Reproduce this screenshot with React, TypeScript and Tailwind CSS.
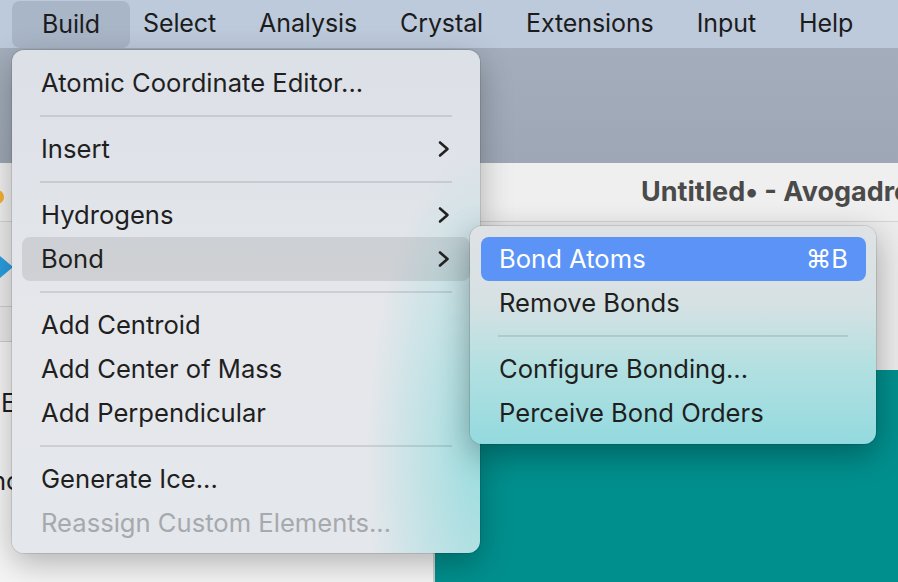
import React from "react";

const ink = "text-[#1f1f1f]";

function Chevron() {
  return (
    <svg width="14" height="18" viewBox="0 0 14 18" className="shrink-0">
      <path d="M3 2.5 L10.5 9 L3 15.5" fill="none" stroke="#222" strokeWidth="2.6" strokeLinecap="round" strokeLinejoin="round" />
    </svg>
  );
}

function Item({ label, sub, active, disabled }: { label: string; sub?: boolean; active?: boolean; disabled?: boolean }) {
  return (
    <div
      className={`mx-[10px] h-[44px] px-[19px] flex items-center justify-between rounded-[8px] ${
        active ? "bg-black/[0.09]" : ""
      } ${disabled ? "text-[#a6a9ad]" : ink}`}
    >
      <span>{label}</span>
      {sub && <Chevron />}
    </div>
  );
}

function Sep({ inset }: { inset: string }) {
  return (
    <div className={`h-[22px] flex items-center ${inset}`}>
      <div className="h-[2px] w-full bg-black/[0.1]" />
    </div>
  );
}

function SubItem({ label, keys, active }: { label: string; keys?: string; active?: boolean }) {
  return (
    <div
      className={`ml-[11px] mr-[10px] h-[44px] px-[18px] flex items-center justify-between rounded-[8px] ${
        active ? "bg-[#5b94f6] text-white" : ink
      }`}
    >
      <span>{label}</span>
      {keys && <span className="font-['Inter','DejaVu_Sans',sans-serif]">{keys}</span>}
    </div>
  );
}

export default function App() {
  const bar = ["Select", "Analysis", "Crystal", "Extensions", "Input", "Help"];
  return (
    <div className="relative w-[898px] h-[582px] overflow-hidden bg-[#f4f4f4] font-['Inter','Noto_Sans',sans-serif] text-[25.6px]">
      {/* menu bar */}
      <div className="h-[48px] bg-[#bdcadb] flex items-stretch text-[#1c1c1c] text-[25px] tracking-[-0.1px]">
        <div className="ml-[12px] mt-[1px] w-[118px] rounded-[8px] bg-[#a9b6c7] flex items-center justify-center">
          Build
        </div>
        <div className="ml-[13px] flex items-center gap-[43px]">
          {bar.map((b) => (
            <span key={b}>{b}</span>
          ))}
        </div>
      </div>

      {/* desktop strip */}
      <div className="h-[115px] bg-[linear-gradient(180deg,#a3adbb,#9da7b5)]" />

      {/* window title bar */}
      <div className="relative h-[59px] bg-[#efefef] border-b border-[#d4d4d4] flex items-center pl-[641px]">
        <div className="absolute left-[-10px] top-[27px] w-[14px] h-[14px] rounded-full bg-[#f5b032]" />
        <span className="font-bold text-[27px] text-[#4a4a4a] whitespace-nowrap">Untitled• - Avogadro</span>
      </div>

      {/* window body */}
      <div className="flex h-[360px]">
        <div className="w-[435px] border-r-2 border-[#cfcfcf] flex flex-col">
          <div className="h-[85px] bg-[#ececec] border-b border-[#cdcdcd] flex items-center">
            <svg width="14" height="22" viewBox="0 0 14 22" className="mt-[6px]">
              <path d="M0 0 L13 11 L0 22 Z" fill="#2a9ee0" />
            </svg>
          </div>
          <div className="h-[35px] bg-[#e9e9e9] border-b border-[#cdcdcd]" />
          <div className="flex-1 bg-[#f5f5f5] text-[#1f1f1f] overflow-hidden">
            <div className="mt-[42px] ml-[1px]">E</div>
            <div className="mt-[40px] -ml-[9px]">nc</div>
          </div>
        </div>
        <div className="flex-1 flex flex-col">
          <div className="h-[148px] bg-[#ececec]" />
          <div className="flex-1 bg-[#018f8d]" />
        </div>
      </div>

      {/* Build menu */}
      <div className="absolute left-[12px] top-[50px] w-[468px] h-[503px] rounded-[12px] pt-[11px] ring-1 ring-black/10 shadow-[0_10px_32px_rgba(0,0,0,0.28)] bg-[radial-gradient(ellipse_24%_62%_at_100%_82%,rgba(150,220,222,0.9),transparent),linear-gradient(180deg,#dce0e7,#e5e7eb_55%,#e4e7eb)]">
        <Item label="Atomic Coordinate Editor..." />
        <Sep inset="mx-[28px]" />
        <Item label="Insert" sub />
        <Sep inset="mx-[28px]" />
        <Item label="Hydrogens" sub />
        <Item label="Bond" sub active />
        <Sep inset="mx-[28px]" />
        <Item label="Add Centroid" />
        <Item label="Add Center of Mass" />
        <Item label="Add Perpendicular" />
        <Sep inset="mx-[28px]" />
        <Item label="Generate Ice..." />
        <Item label="Reassign Custom Elements..." disabled />
      </div>

      {/* Bond submenu */}
      <div className="absolute left-[470px] top-[226px] w-[406px] h-[218px] rounded-[12px] pt-[11px] ring-1 ring-black/10 shadow-[0_10px_32px_rgba(0,0,0,0.32)] bg-[linear-gradient(180deg,#dfe2e5_0%,#d6e1e3_35%,#b3e0e1_65%,#93dadf_100%)]">
        <SubItem label="Bond Atoms" keys="⌘B" active />
        <SubItem label="Remove Bonds" />
        <Sep inset="ml-[28px] mr-[28px]" />
        <SubItem label="Configure Bonding..." />
        <SubItem label="Perceive Bond Orders" />
      </div>
    </div>
  );
}
